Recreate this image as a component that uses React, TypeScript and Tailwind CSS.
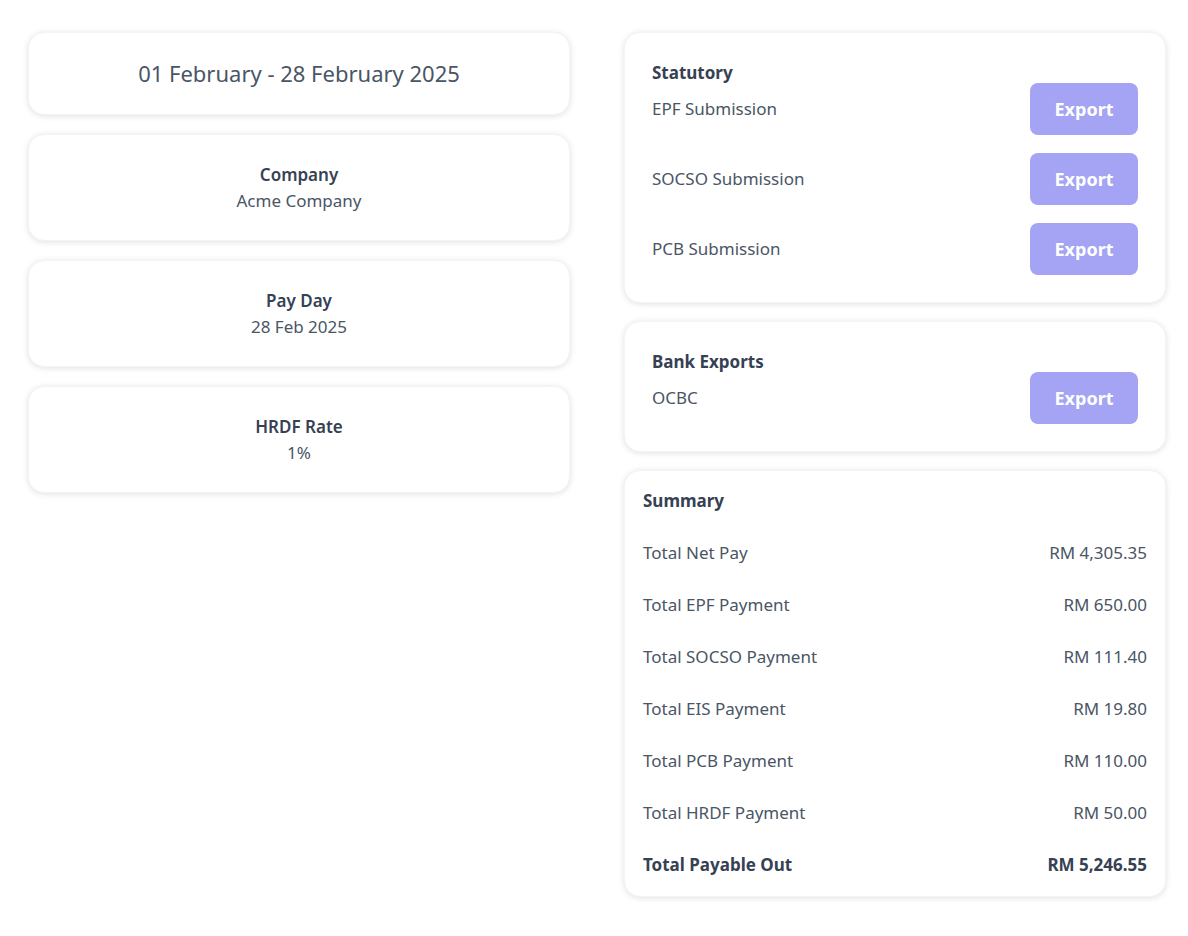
import React from "react";

const card = "bg-white rounded-2xl shadow-[0_1px_6px_rgba(0,0,0,0.12)] border border-gray-100";

const InfoCard = ({ label, value }: { label: string; value: string }) => (
    <div className={`${card} h-[107px] flex flex-col items-center justify-center`}>
        <span className="text-[17px] font-semibold text-gray-700 leading-[26px]">{label}</span>
        <span className="text-[17px] text-gray-600 leading-[26px]">{value}</span>
    </div>
);

const ExportRow = ({ title }: { title: string }) => (
    <div className="flex items-center justify-between h-[52px]">
        <span className="text-[17px] text-gray-600">{title}</span>
        <button className="w-[108px] h-[52px] rounded-lg bg-[#a5a4f4] text-white text-[18px] font-bold">Export</button>
    </div>
);

const summary: [string, string][] = [
    ["Total Net Pay", "RM 4,305.35"],
    ["Total EPF Payment", "RM 650.00"],
    ["Total SOCSO Payment", "RM 111.40"],
    ["Total EIS Payment", "RM 19.80"],
    ["Total PCB Payment", "RM 110.00"],
    ["Total HRDF Payment", "RM 50.00"],
];

export default function App() {
    return (
        <div className="min-h-[936px] bg-white pl-[28px] pt-[32px] flex gap-[54px] font-['Lato','Noto_Sans',sans-serif]">
            <div className="w-[542px] shrink-0 flex flex-col gap-[19px]">
                <div className={`${card} h-[83px] flex items-center justify-center`}>
                    <span className="text-[22px] text-gray-600">01 February - 28 February 2025</span>
                </div>
                <InfoCard label="Company" value="Acme Company" />
                <InfoCard label="Pay Day" value="28 Feb 2025" />
                <InfoCard label="HRDF Rate" value="1%" />
            </div>
            <div className="w-[542px] shrink-0 flex flex-col gap-[18px]">
                <div className={`${card} px-[27px] pt-[28px] pb-[27px]`}>
                    <div className="text-[17px] font-bold text-gray-700 leading-[24px] -mb-[2px]">Statutory</div>
                    <div className="flex flex-col gap-[18px]">
                        <ExportRow title="EPF Submission" />
                        <ExportRow title="SOCSO Submission" />
                        <ExportRow title="PCB Submission" />
                    </div>
                </div>
                <div className={`${card} px-[27px] pt-[28px] pb-[27px]`}>
                    <div className="text-[17px] font-bold text-gray-700 leading-[24px] -mb-[2px]">Bank Exports</div>
                    <ExportRow title="OCBC" />
                </div>
                <div className={`${card} px-[18px] pt-[17px] pb-[5px]`}>
                    <div className="h-[26px] mb-[13px] flex items-center text-[17px] font-bold text-gray-700">Summary</div>
                    {summary.map(([k, v]) => (
                        <div key={k} className="h-[52px] flex items-center justify-between text-[17px] text-gray-600">
                            <span>{k}</span>
                            <span>{v}</span>
                        </div>
                    ))}
                    <div className="h-[52px] flex items-center justify-between text-[17px] font-bold text-gray-700">
                        <span>Total Payable Out</span>
                        <span>RM 5,246.55</span>
                    </div>
                </div>
            </div>
        </div>
    );
}
